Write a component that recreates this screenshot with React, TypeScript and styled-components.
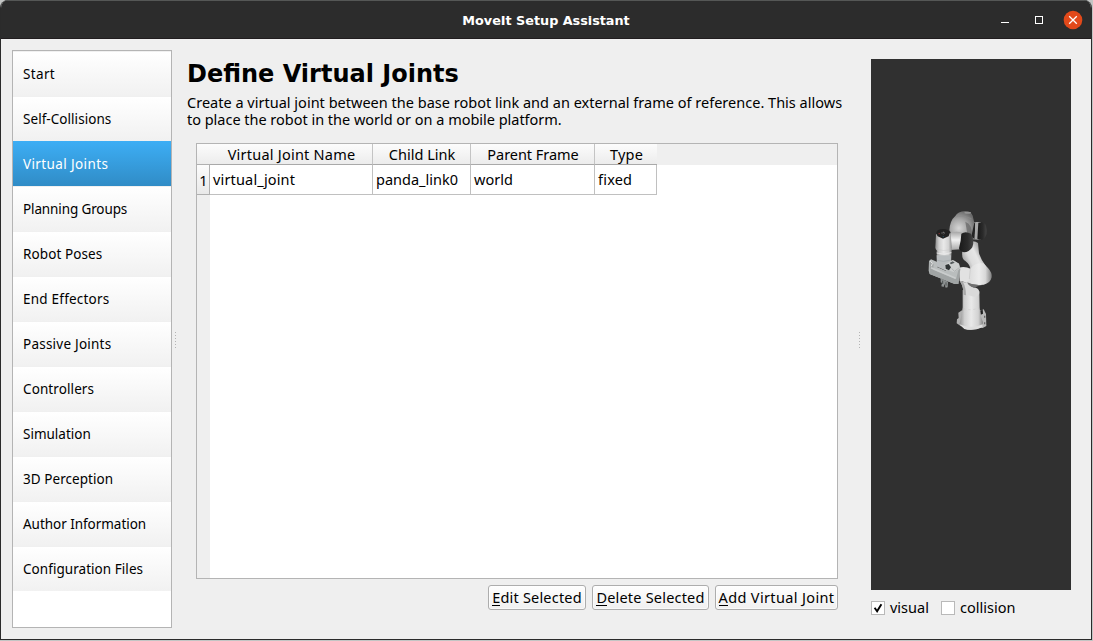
import React from 'react';
import styled, { createGlobalStyle } from 'styled-components';

const GlobalStyle = createGlobalStyle`
  * { box-sizing: border-box; }
  body {
    margin: 0;
    background: #c3c5c4;
    color: #000;
    font-family: "Noto Sans", "Open Sans", sans-serif;
    font-size: 14.5px;
    overflow: hidden;
  }
`;

const Window = styled.div`
  width: 1092px;
  height: 640px;
  display: flex;
  flex-direction: column;
  background: #efefef;
  border: 1px solid #2b2b2b;
  border-top: 0;
  border-radius: 8px 8px 0 0;
  overflow: hidden;
`;

const TitleBar = styled.header`
  height: 39px;
  flex: none;
  display: grid;
  grid-template-columns: 1fr auto 1fr;
  align-items: center;
  background: #2c2c2c;
  border-top: 1px solid #555756;
  border-bottom: 1px solid #211d1f;
`;

const WindowTitle = styled.h1`
  grid-column: 2;
  margin: 2px 0 0;
  font: bold 12.8px/18px "DejaVu Sans", sans-serif;
  letter-spacing: -0.02px;
  color: #fff;
`;

const WindowControls = styled.svg`
  justify-self: end;
  margin: 1px 7px 0 0;
  width: 90px;
  height: 22px;
`;

const Content = styled.div`
  flex: 1;
  display: flex;
  min-height: 0;
  padding: 11px 20px 0 11px;
`;

const Sidebar = styled.nav`
  width: 160px;
  height: 578px;
  flex: none;
  background: #fff;
  border: 1px solid #b4b4b4;
`;

const NavItem = styled.div<{ $active?: boolean }>`
  height: 45px;
  padding: ${(p) => (p.$active ? '1px' : '0')} 10px 0;
  border-top: ${(p) => (p.$active ? '0' : '1px solid #f0f0f0')};
  background: ${(p) =>
    p.$active
      ? 'linear-gradient(#3daef5, #308cc6)'
      : 'linear-gradient(#ffffff, #f1f1f1)'};
  color: ${(p) => (p.$active ? '#fff' : '#000')};
  font-size: 13.5px;
  line-height: 44px;
  white-space: nowrap;
`;

const Tracked = styled.span<{ $spacing: number }>`
  letter-spacing: ${(p) => p.$spacing}px;
  white-space: nowrap;
`;

const SplitHandle = styled.div<{ $before: number; $after: number }>`
  width: 1px;
  height: 16px;
  flex: none;
  margin: 282px ${(p) => p.$after}px 0 ${(p) => p.$before}px;
  background: repeating-linear-gradient(#b4b4b4 0 1px, transparent 1px 3px);
`;

const Main = styled.main`
  width: 660px;
  flex: none;
  display: flex;
  flex-direction: column;
`;

const Heading = styled.h2`
  margin: 10px 0 0;
  font: bold 24px/28px "DejaVu Sans", sans-serif;
`;

const Description = styled.div`
  margin: 6px 0 0;
`;

const DescriptionLine = styled.div<{ $spacing: number }>`
  height: 17px;
  line-height: 17px;
  letter-spacing: ${(p) => p.$spacing}px;
  white-space: nowrap;
`;

const TableFrame = styled.div`
  width: 642px;
  height: 436px;
  margin: 15px 0 0 9px;
  border: 1px solid #b4b4b4;
  background: linear-gradient(to right, #efefef 13px, #fff 13px);
`;

const HeaderRow = styled.div`
  height: 21px;
  display: flex;
  background: #efefef;
`;

const headerFill = 'linear-gradient(#fcfcfc, #ececec)';

const Corner = styled.div`
  width: 13px;
  background: ${headerFill};
  border-bottom: 1px solid #b0b0b0;
`;

const HeaderCell = styled.div<{ $width: number; $last?: boolean }>`
  width: ${(p) => p.$width}px;
  padding-left: 1px;
  background: ${headerFill};
  border-right: ${(p) => (p.$last ? '0' : '1px solid #c4c4c4')};
  border-bottom: 1px solid #a9a9a9;
  line-height: 20px;
  text-align: center;
`;

const BodyRow = styled.div`
  height: 30px;
  display: flex;
`;

const RowNumber = styled.div`
  width: 13px;
  padding-left: 1px;
  background: linear-gradient(#fcfcfc, #e9e9e9);
  border-right: 1px solid #b0b0b0;
  border-bottom: 1px solid #b0b0b0;
  line-height: 31px;
  text-align: center;
`;

const Cell = styled.div<{ $width: number }>`
  width: ${(p) => p.$width}px;
  padding-left: 3px;
  border-right: 1px solid #c0c0c0;
  border-bottom: 1px solid #c0c0c0;
  line-height: 29px;
`;

const Actions = styled.div`
  display: flex;
  justify-content: flex-end;
  gap: 6px;
  margin: 6px 9px 0 0;
`;

const Button = styled.button<{ $width: number; $spacing: number }>`
  width: ${(p) => p.$width}px;
  height: 25px;
  padding: 0;
  border: 1px solid #adadad;
  border-radius: 3px;
  background: linear-gradient(#fefefe, #f0f0f0);
  box-shadow: inset 0 0 0 1px rgba(255, 255, 255, 0.6);
  font: inherit;
  line-height: 23px;
  letter-spacing: ${(p) => p.$spacing}px;
  color: #000;
  white-space: nowrap;
`;

const Mnemonic = styled.span`
  display: inline-block;
  height: 18px;
  line-height: 18px;
  border-bottom: 1px solid #000;
`;

const Preview = styled.aside`
  width: 200px;
  padding-top: 9px;
`;

const Viewport = styled.div`
  height: 531px;
  padding: 141px 0 0 44px;
  background: #303030;
`;

const Robot = styled.svg`
  display: block;
  width: 90px;
  height: 140px;
`;

const Toggles = styled.div`
  display: flex;
  margin-top: 7px;
`;

const Toggle = styled.div<{ $width: number }>`
  width: ${(p) => p.$width}px;
  display: flex;
  align-items: center;
  gap: 5px;
  line-height: 20px;
`;

const CheckBox = styled.span`
  width: 14px;
  height: 14px;
  flex: none;
  display: flex;
  margin-top: 1px;
  border: 1px solid #b9b9b9;
  background: #fff;
`;

const pages: [string, number][] = [
  ['Start', 0.35],
  ['Self-Collisions', 0.05],
  ['Virtual Joints', 0.38],
  ['Planning Groups', -0.12],
  ['Robot Poses', 0.1],
  ['End Effectors', 0.22],
  ['Passive Joints', 0.23],
  ['Controllers', 0.1],
  ['Simulation', 0],
  ['3D Perception', 0.06],
  ['Author Information', -0.04],
  ['Configuration Files', 0.05],
];

const columns = [
  { title: 'Virtual Joint Name', titleSpacing: 0.23, width: 163, value: 'virtual_joint', spacing: 0.16 },
  { title: 'Child Link', titleSpacing: 0.02, width: 98, value: 'panda_link0', spacing: 0 },
  { title: 'Parent Frame', titleSpacing: -0.04, width: 124, value: 'world', spacing: 0 },
  { title: 'Type', titleSpacing: 0.2, width: 62, value: 'fixed', spacing: 0.2 },
];

function PandaArm() {
  return (
    <Robot viewBox="0 0 270 420">
      <defs>
        <linearGradient id="tube" x1="0" x2="1" y1="0" y2="0">
          <stop offset="0" stopColor="#8e8e8e" />
          <stop offset="0.22" stopColor="#cfcfcf" />
          <stop offset="0.5" stopColor="#e9e9e9" />
          <stop offset="0.8" stopColor="#d2d2d2" />
          <stop offset="1" stopColor="#858585" />
        </linearGradient>
        <linearGradient id="upper" gradientUnits="userSpaceOnUse" x1="140" y1="190" x2="212" y2="155">
          <stop offset="0" stopColor="#8f8f8f" />
          <stop offset="0.35" stopColor="#dcdcdc" />
          <stop offset="0.62" stopColor="#e6e6e6" />
          <stop offset="0.85" stopColor="#a8a8a8" />
          <stop offset="1" stopColor="#858585" />
        </linearGradient>
        <linearGradient id="forearm" gradientUnits="userSpaceOnUse" x1="160" y1="0" x2="231" y2="0">
          <stop offset="0" stopColor="#dadada" />
          <stop offset="0.45" stopColor="#ececec" />
          <stop offset="0.72" stopColor="#d8d8d8" />
          <stop offset="1" stopColor="#7c7c7c" />
        </linearGradient>
        <linearGradient id="barrel" x1="0" x2="0" y1="0" y2="1">
          <stop offset="0" stopColor="#a5a5a5" />
          <stop offset="0.45" stopColor="#f1f1f1" />
          <stop offset="1" stopColor="#a9a9a9" />
        </linearGradient>
        <radialGradient id="dome" cx="0.38" cy="0.68" r="0.7">
          <stop offset="0" stopColor="#d6d6d6" />
          <stop offset="0.5" stopColor="#a8a8a8" />
          <stop offset="1" stopColor="#6a6a6a" />
        </radialGradient>
        <linearGradient id="cap" x1="0" x2="1">
          <stop offset="0" stopColor="#191919" />
          <stop offset="0.6" stopColor="#2b2b2b" />
          <stop offset="1" stopColor="#454545" />
        </linearGradient>
      </defs>

      <path d="M190 334 L206 328 L213 342 L214 378 L203 384 L188 378Z" fill="#b9b9b9" />
      <path d="M196 333 L203 328 L204 341 L197 344Z" fill="#202020" />
      <path d="M130 338 L142 330 L146 366 L138 379 L125 370 L126 358 L131 354Z" fill="#b0b0b0" />
      <path d="M143 270 Q166 255 193 274 L194 322 Q196 351 204 366 L203 380 Q178 393 151 387 L133 374 Q140 349 143 322Z" fill="url(#tube)" />
      <path d="M133 373 Q169 388 203 373 L203 382 Q174 394 148 387Z" fill="#dedede" />
      <path d="M145 326 Q168 333 192 324" stroke="#bcbcbc" strokeWidth="1" strokeDasharray="7 8" fill="none" />
      <path d="M207 347h4v6h-4zM207 367h4v6h-4z" fill="#666" />

      <path d="M142 153 L150 128 Q178 119 189 129 L192 160 Q198 180 214 200 L200 222 L166 214 Q169 197 151 183 Q139 178 142 153Z" fill="url(#upper)" />
      <path d="M166 206 Q178 188 205 190 L219 204 Q232 218 230 232 Q226 250 206 254 Q180 258 156 249 L160 206Z" fill="url(#forearm)" />
      <path d="M134 242 Q147 249 157 246 Q164 262 182 263 Q194 267 193 280 Q188 292 177 290 L147 282 Q145 258 134 242Z" fill="#dadada" />
      <path d="M156 247 Q176 257 204 254 Q186 259 178 263 Q162 260 156 247Z" fill="#707070" />
      <path d="M134 242 Q145 258 146 284 L153 286 Q153 262 144 246Z" fill="#a8a8a8" />
      <path d="M132 203 Q151 198 167 207 L165 236 L156 248 L134 242Z" fill="#e2e2e2" />
      <path d="M166 206 L163 237" stroke="#bdbdbd" strokeWidth="1.5" />

      <path d="M169 67 L198 66 L197 119 L171 118Z" fill="#bcbcbc" />
      <path d="M170 71 L181 67 L179 118 L170 112Z" fill="#242424" />
      <path d="M181 68 L191 67 L187 117 L179 117Z" fill="#a8a8a8" />
      <path d="M190 68 Q207 64 213 77 Q219 104 207 116 Q198 123 187 116Z" fill="url(#cap)" />
      <path d="M103 91 Q105 61 121 48 Q128 35 151 33 Q168 34 173 47 L178 68 L169 109 L112 105Z" fill="url(#dome)" />
      <path d="M120 51 Q140 44 169 56" stroke="#8d8d8d" strokeWidth="2" fill="none" />
      <ellipse cx="158" cy="38" rx="10" ry="3" fill="#949494" />
      <path d="M151 65 Q174 73 170 112 L158 108Z" fill="#686868" opacity="0.75" />

      <path d="M106 98 Q123 92 145 98 L139 148 L106 150Z" fill="url(#barrel)" />
      <path d="M139 101 Q151 92 168 101 Q180 120 172 142 Q162 157 147 157 Q134 154 132 145 Q138 124 139 101Z" fill="url(#cap)" />

      <path d="M65 153 L110 151 L108 195 L91 211 L66 197Z" fill="url(#tube)" />
      <path d="M63 103 Q84 86 107 101 L111 150 Q97 166 72 158 Q61 151 61 142Z" fill="url(#tube)" />
      <path d="M63 144 Q84 158 111 146" stroke="#bebebe" strokeWidth="1" fill="none" />
      <path d="M65 159 Q87 166 109 158" stroke="#e8e8e8" strokeWidth="3" fill="none" />
      <path d="M63 100 L68 91 Q83 84 99 90 L105 97 L101 109 L84 116 L68 109Z" fill="#202020" />
      <path d="M79 99h12M85 95v8" stroke="#999" strokeWidth="2" strokeDasharray="4 3" />
      <path d="M71 101h3" stroke="#a83434" strokeWidth="3" />
      <path d="M83 110h4" stroke="#2b6780" strokeWidth="2" />

      <path d="M42 183 L48 178 L67 186 L66 201 L92 212 L95 190 L116 181 L132 191 L136 205 L130 252 L119 252 L44 222 L41 212Z" fill="#b9bdbd" />
      <path d="M43 183 L56 193 L54 209 L123 238 L131 208 L136 207 L130 252 L119 252 L44 222Z" fill="#a0a4a4" />
      <path d="M48 203 L122 235" stroke="#c9cccc" strokeWidth="5" />
      <path d="M65 166 L108 166 L107 184 L91 197 L91 211 L66 200Z" fill="#b9bdbf" />
      <path d="M67 181 Q84 188 107 180" stroke="#a0a7aa" strokeWidth="2" fill="none" />
      <path d="M89 194 L112 180 L132 191 L134 206 L117 217 L91 207Z" fill="#cccfcf" />
      <path d="M91 195 L101 192 L108 202 L102 211 L92 206Z" fill="#303536" />
      <path d="M104 189 L113 184 L119 188 L108 193Z" fill="#555b5d" />
      <path d="M110 205 L118 214 L133 203" stroke="#a1a4a4" strokeWidth="2" fill="none" />
      <path d="M46 184 L52 190 L49 199" stroke="#e2e2e2" strokeWidth="3" fill="none" />
      <path d="M77 235 L88 240 L99 245 L98 262 L92 263 L88 252 L86 261 L79 259 L81 249 L77 247Z" fill="#8d9191" />
      <path d="M83 242v10M93 247v10" stroke="#4d5151" strokeWidth="3" />
    </Robot>
  );
}

export default function App() {
  return (
    <>
      <GlobalStyle />
      <Window>
        <TitleBar>
          <WindowTitle>MoveIt Setup Assistant</WindowTitle>
          <WindowControls viewBox="0 0 90 22">
            <path d="M7 13.5h8" stroke="#fff" strokeWidth="1" />
            <rect x="41.5" y="7.5" width="7" height="7" fill="none" stroke="#fff" strokeWidth="1" />
            <circle cx="79" cy="11" r="9.3" fill="#e2491a" />
            <path d="M75.2 7.2l7.6 7.6M82.8 7.2l-7.6 7.6" stroke="#fff" strokeWidth="1.3" />
          </WindowControls>
        </TitleBar>
        <Content>
          <Sidebar>
            {pages.map(([label, spacing]) => (
              <NavItem key={label} $active={label === 'Virtual Joints'}>
                <Tracked $spacing={spacing}>{label}</Tracked>
              </NavItem>
            ))}
          </Sidebar>
          <SplitHandle $before={3} $after={11} />
          <Main>
            <Heading>Define Virtual Joints</Heading>
            <Description>
              <DescriptionLine $spacing={0.01}>
                Create a virtual joint between the base robot link and an external frame of reference. This allows
              </DescriptionLine>
              <DescriptionLine $spacing={-0.02}>
                to place the robot in the world or on a mobile platform.
              </DescriptionLine>
            </Description>
            <TableFrame>
              <HeaderRow>
                <Corner />
                {columns.map((c, i) => (
                  <HeaderCell key={c.title} $width={c.width} $last={i === columns.length - 1}>
                    <Tracked $spacing={c.titleSpacing}>{c.title}</Tracked>
                  </HeaderCell>
                ))}
              </HeaderRow>
              <BodyRow>
                <RowNumber>1</RowNumber>
                {columns.map((c) => (
                  <Cell key={c.title} $width={c.width}>
                    <Tracked $spacing={c.spacing}>{c.value}</Tracked>
                  </Cell>
                ))}
              </BodyRow>
            </TableFrame>
            <Actions>
              <Button $width={98} $spacing={0.2}><Mnemonic>E</Mnemonic>dit Selected</Button>
              <Button $width={117} $spacing={0.2}><Mnemonic>D</Mnemonic>elete Selected</Button>
              <Button $width={123} $spacing={0.36}><Mnemonic>A</Mnemonic>dd Virtual Joint</Button>
            </Actions>
          </Main>
          <SplitHandle $before={12} $after={11} />
          <Preview>
            <Viewport>
              <PandaArm />
            </Viewport>
            <Toggles>
              <Toggle $width={70}>
                <CheckBox>
                  <svg width="12" height="12" viewBox="0 0 12 12">
                    <path d="M2.6 5.8L5.1 9.2L9.4 2.2" fill="none" stroke="#000" strokeWidth="1.9" />
                  </svg>
                </CheckBox>
                visual
              </Toggle>
              <Toggle $width={90}>
                <CheckBox />
                collision
              </Toggle>
            </Toggles>
          </Preview>
        </Content>
      </Window>
    </>
  );
}
